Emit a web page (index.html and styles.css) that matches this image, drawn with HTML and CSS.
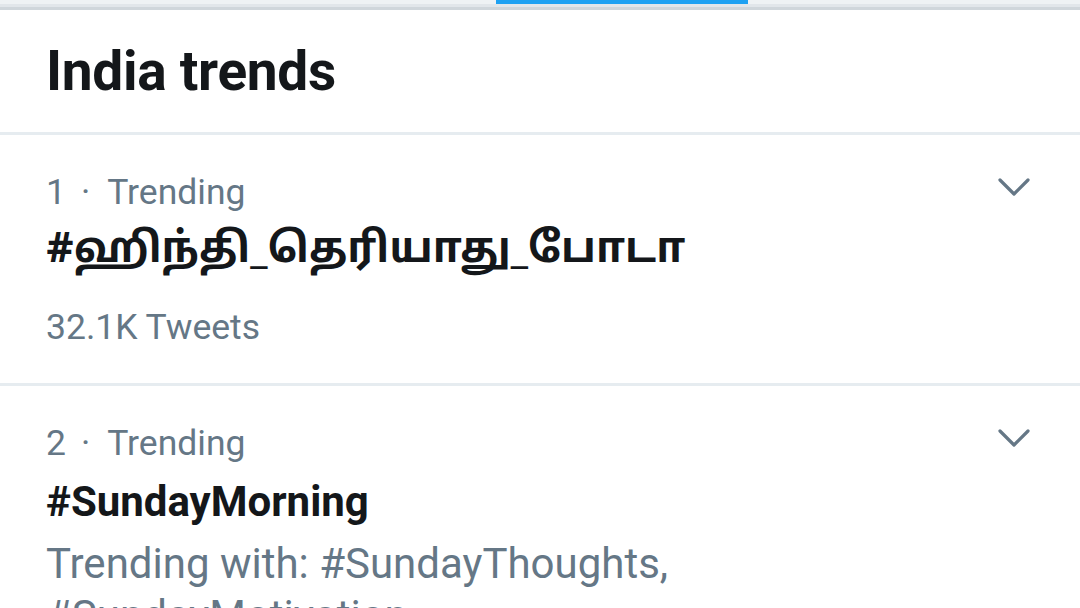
FILE: index.html
```html
<!DOCTYPE html>
<html lang="en">

<head>
  <meta charset="UTF-8">
  <title>India trends</title>
  <link rel="stylesheet" href="styles.css">
</head>

<body>
  <div class="tabs">
    <div class="tab-indicator"></div>
  </div>
  <div class="header">
    <h1 class="title">India trends</h1>
  </div>
  <div class="trend">
    <div class="trend-body">
      <div class="trend-meta">1<span class="dot">·</span>Trending</div>
      <div class="trend-name tamil">#ஹிந்தி_தெரியாது_போடா</div>
      <div class="trend-count">32.1K Tweets</div>
    </div>
    <svg class="chevron" viewBox="0 0 32 20" width="32" height="20">
      <path d="M2 2 L16 16 L30 2" fill="none" stroke="#657786" stroke-width="3.2" stroke-linecap="round" stroke-linejoin="round" />
    </svg>
  </div>
  <div class="trend">
    <div class="trend-body">
      <div class="trend-meta">2<span class="dot">·</span>Trending</div>
      <div class="trend-name">#SundayMorning</div>
      <div class="trend-with">Trending with: #SundayThoughts,<br>#SundayMotivation</div>
    </div>
    <svg class="chevron" viewBox="0 0 32 20" width="32" height="20">
      <path d="M2 2 L16 16 L30 2" fill="none" stroke="#657786" stroke-width="3.2" stroke-linecap="round" stroke-linejoin="round" />
    </svg>
  </div>
</body>

</html>
```

FILE: styles.css
```css
body {
  --foreground: #14171a;
  --secondary: #657786;
  --divider: #e6ecf0;
  --blue: #1da1f2;

  margin: 0;
  background-color: #fff;
  color: var(--foreground);
  font-family: Roboto, "Noto Sans", sans-serif;
  overflow: hidden;
}

.tabs {
  height: 4px;
  background-color: #eef2f4;
  border-bottom: 3px solid #e1e6ea;
  box-shadow: 0 3px 0 #cfd6db;
  margin-bottom: 3px;
}

.tab-indicator {
  margin-left: 496px;
  width: 252px;
  height: 4px;
  background-color: var(--blue);
}

.header {
  height: 122px;
  padding-left: 46px;
  border-bottom: 3px solid var(--divider);
}

.title {
  margin: 0;
  font-size: 55px;
  line-height: 122px;
  font-weight: 700;
  letter-spacing: -0.3px;
}

.trend {
  display: flex;
  padding: 34px 0 33px 46px;
  border-bottom: 3px solid var(--divider);
}

.trend-body {
  flex: 1;
  min-width: 0;
}

.trend-meta,
.trend-count {
  font-size: 35.5px;
  line-height: 46px;
  color: var(--secondary);
}

.dot {
  margin: 0 17px 0 15px;
}

.trend-name {
  margin-top: 8px;
  font-size: 42px;
  line-height: 56px;
  font-weight: 700;
  white-space: nowrap;
}

.tamil {
  margin-top: 9px;
  font-family: "Noto Sans Tamil", "Lohit Tamil", "Noto Sans", Roboto, sans-serif;
}

.trend-count {
  margin-top: 24px;
}

.trend-with {
  margin-top: 8px;
  font-size: 42px;
  line-height: 52px;
  color: var(--secondary);
  white-space: nowrap;
}

.chevron {
  flex: none;
  margin: 9px 50px 0 0;
}
```
